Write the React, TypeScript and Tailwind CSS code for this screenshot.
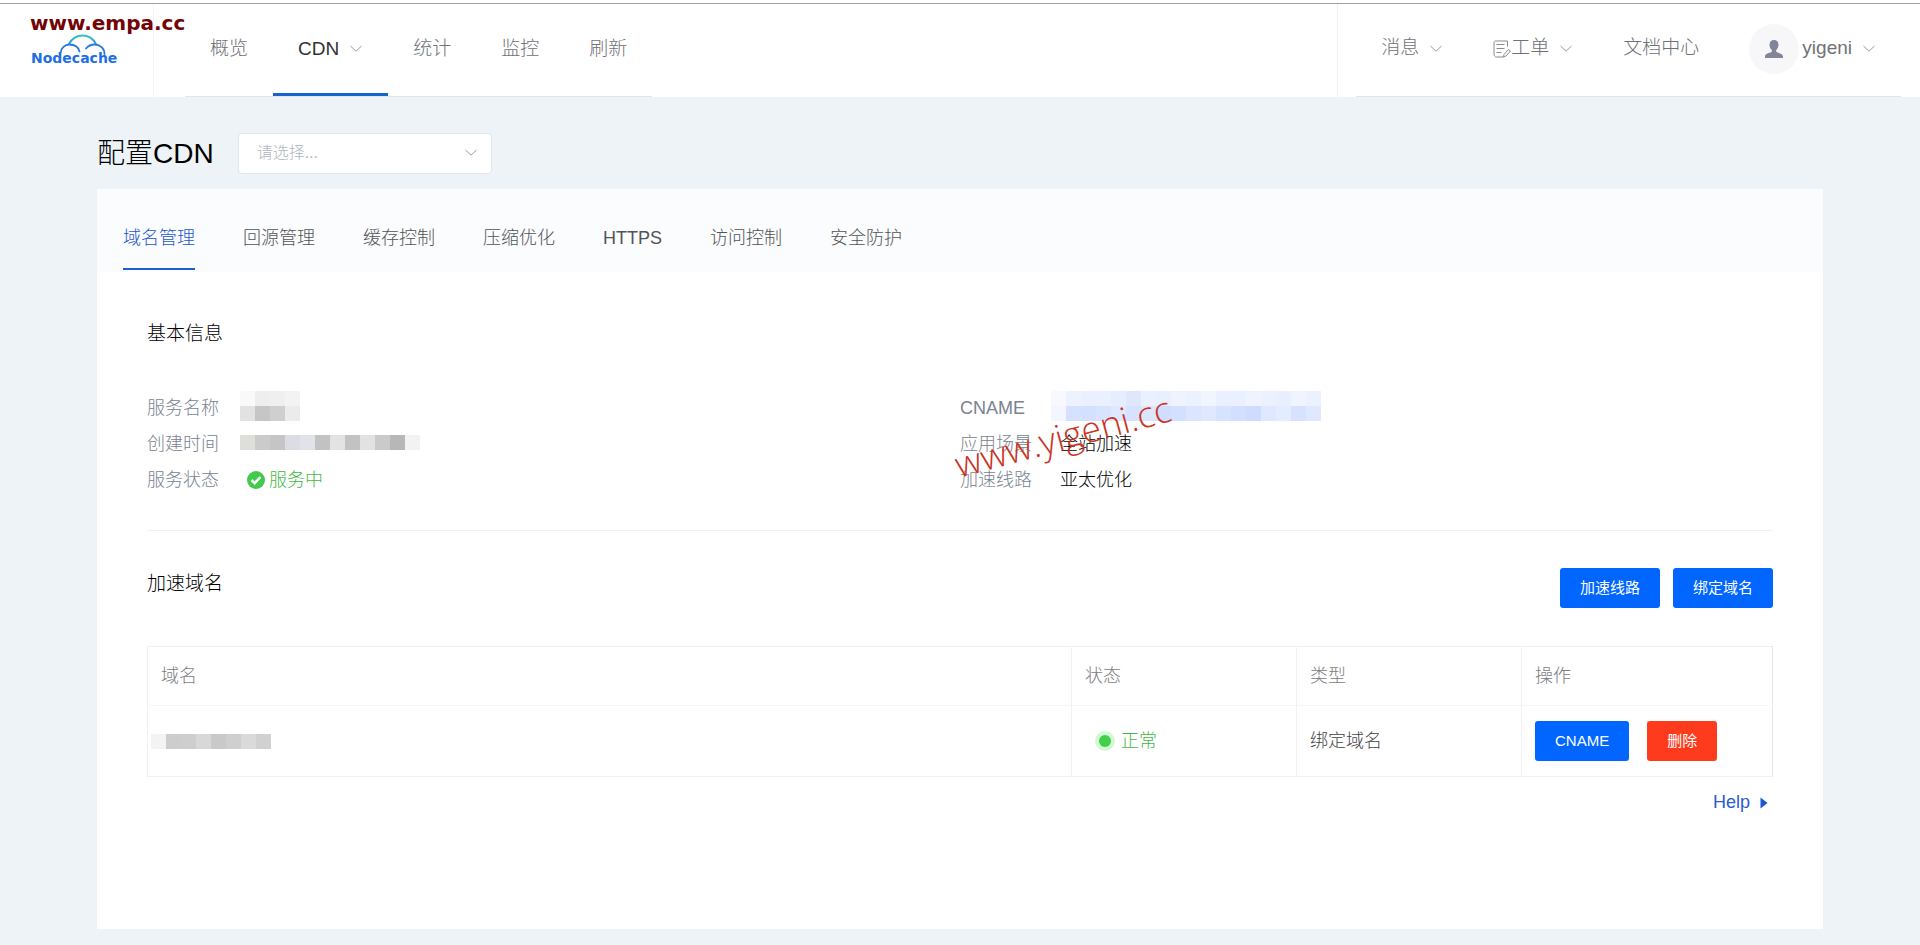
import React, {useState} from 'react';

const navItems = [
    {label: '概览'},
    {label: 'CDN', hasMenu: true},
    {label: '统计'},
    {label: '监控'},
    {label: '刷新'},
];

const tabs = ['域名管理', '回源管理', '缓存控制', '压缩优化', 'HTTPS', '访问控制', '安全防护'];

// Masked values, one colour per 15px block
const nameMask = [
    ['#f9f9f9', '#eeeeee', '#efefef', '#f3f3f3'],
    ['#e2e2e2', '#c6c6c6', '#cfcfcf', '#ebebeb'],
];
const timeMask = [
    ['#dededa', '#cbcbcb', '#c5c5c5', '#dcdce4', '#e2e3e8', '#c2c2c2', '#e3e3e3', '#c2c2c2', '#e2e2e2', '#cacaca', '#b7b7b7', '#f2f2f2'],
];
const cnameMask = [
    ['#f7f9ff', '#edf2ff', '#eaf0ff', '#eaf0ff', '#e6edff', '#dfe7fd', '#eaf0ff', '#e8effe', '#eef3ff', '#ebf1ff', '#f1f5ff', '#eaf0ff', '#e9f0ff', '#eef3ff', '#ebf1ff', '#e9effe', '#eff4ff', '#ebf1ff'],
    ['#f3f6ff', '#d5e1fe', '#d3e0fe', '#d8e3fe', '#dfe8ff', '#d6e2ff', '#dce6ff', '#cfddfe', '#d4e0ff', '#dbe5fe', '#dfe8ff', '#d6e2ff', '#d3dffe', '#cfdcfd', '#dfe8ff', '#e4ecff', '#d7e2fe', '#dfe8ff'],
];
const domainMask = [
    ['#f3f3f3', '#cdcdcd', '#cecece', '#d8d8d8', '#c9c9c9', '#cfcfcf', '#dadada', '#d1d1d1'],
];

const Mask = ({rows}: {rows: string[][]}) => (
    <div className="flex flex-col" aria-hidden="true">
        {rows.map((row, i) => (
            <div key={i} className="flex">
                {row.map((color, j) => (
                    <span key={j} className="h-[15px] w-[15px]" style={{backgroundColor: color}} />
                ))}
            </div>
        ))}
    </div>
);

const Chevron = () => (
    <svg className="w-[14px] h-[14px] shrink-0" viewBox="0 0 14 14" fill="none" stroke="#9a9ba0" aria-hidden="true">
        <path d="M1.5 4 7 9.200l5.5-5.2" />
    </svg>
);

const Logo = () => (
    <svg className="w-[92px] h-[34px] overflow-visible" viewBox="0 0 92 34" role="img" aria-label="Nodecache">
        <defs>
            <linearGradient id="cloud" x1="0" y1="0" x2="0" y2="1">
                <stop offset="0" stopColor="#35c4b4" />
                <stop offset="1" stopColor="#2a8fe0" />
            </linearGradient>
        </defs>
        <g fill="none" strokeWidth="1.8" strokeLinecap="round">
            <path d="M38 10C41 4.500 46 1.500 51.500 1.500S62 4.500 65 10" stroke="url(#cloud)" />
            <path d="M29.500 19c.3-4.600 4-8.500 9-8.500 4.800 0 8.800 2.500 10 7" stroke="#2a78e6" />
            <path d="M55 14.500c2-2.400 5.200-4 8.500-4 5.500 0 10 4 10 9.500" stroke="#2a78e6" />
        </g>
        <text x="0" y="29" fill="#1f6fe4" className="font-['DejaVu_Sans'] text-[14px] font-bold">Nodecache</text>
    </svg>
);

const menuItem = 'flex h-full items-center gap-[10px] px-[25px] text-[19px] whitespace-nowrap';
const primaryButton = 'h-10 px-5 rounded-[3px] bg-[#0066ff] text-[15px] font-normal text-white whitespace-nowrap cursor-pointer hover:bg-[#0057db]';

const Header = () => (
    <header className="bg-white pt-[3px]">
        <div className="flex h-[94px] items-stretch border-t border-[#a0a0a4] text-[#707177]">
            <a href="#" className="relative flex w-[154px] items-center border-r border-[#f4f5f7] pl-[31px]">
                <Logo />
                <span className="absolute left-[30px] top-[5px] z-10 font-['DejaVu_Sans'] text-[20px] leading-7 font-bold text-[#730404]">
                    www.empa.cc
                </span>
            </a>
            <nav className="ml-[31px] flex border-b border-[#e1e6ea]">
                {navItems.map((item) => (
                    <a
                        key={item.label}
                        href="#"
                        className={`${menuItem} ${
                            item.hasMenu ? 'border-b-3 border-[#1763cc] pt-px text-[#303133]' : 'pb-[2px]'
                        }`}
                    >
                        {item.label}
                        {item.hasMenu && <Chevron />}
                    </a>
                ))}
            </nav>
            <div className="ml-auto flex border-l border-[#f1f2f5] pl-[18px] pr-[19px]">
                <div className="flex border-b border-[#e1e6ea] pb-[3px]">
                    <a href="#" className={menuItem}>消息<Chevron /></a>
                    <a href="#" className={menuItem}>
                        <span className="flex items-center">
                            <svg className="h-[18px] w-[18px]" viewBox="0 0 18 18" fill="none" stroke="#8a8b90" aria-hidden="true">
                                <path d="M14.500 6.500V1H2.500c-1 0-1.500.7-1.500 1.500v11.500c0 1.700 1 3 2.500 3h7" />
                                <path d="M3.500 4.500h8M3.500 8.500h8M3.500 12.500h5" />
                                <path d="m15.500 9.500 2 1.500-4.500 5-2.500 1 .5-2.500z" />
                            </svg>
                            工单
                        </span>
                        <Chevron />
                    </a>
                    <a href="#" className={menuItem}>文档中心</a>
                    <a href="#" className={menuItem}>
                        <span className="flex items-center gap-[3px]">
                            <span className="flex h-[50px] w-[50px] items-center justify-center rounded-full bg-[#f7f7fa]">
                                <svg className="h-[18px] w-[18px]" viewBox="0 0 18 18" fill="#82859a" aria-hidden="true">
                                    <path d="M9 0c2.800 0 4.500 2 4.500 4.800 0 2-.9 4-2.300 5.200v1.800c.8 1 6.800 1.500 6.800 4.700V18H0v-1.500c0-3.200 6-3.700 6.800-4.700V10C5.400 8.800 4.500 6.800 4.500 4.800 4.500 2 6.200 0 9 0z" />
                                </svg>
                            </span>
                            yigeni
                        </span>
                        <Chevron />
                    </a>
                </div>
            </div>
        </div>
    </header>
);

const InfoRow = ({label, children}: {label: string; children: React.ReactNode}) => (
    <div className="flex h-9 items-center">
        <dt className="w-[100px] text-[#7a8391]">{label}</dt>
        <dd className="flex items-center text-black">{children}</dd>
    </div>
);

const Watermark = () => (
    <svg className="pointer-events-none absolute -left-[10px] top-0 h-[110px] w-[240px] overflow-visible" viewBox="0 0 240 110">
        <text
            transform="translate(9 88) rotate(-15)"
            fill="#c93426"
            className="font-['Open_Sans'] text-[36px] font-light"
        >
            www.yigeni.cc
        </text>
    </svg>
);

const App = () => {
    const [activeTab, setActiveTab] = useState(tabs[0]);

    return (
        <div className="min-h-screen bg-[#edf3f7] pb-[17px] font-['Liberation_Sans','Noto_Sans_CJK_SC',sans-serif] font-light text-[18px]">
            <Header />
            <main className="mx-[97px] pt-[35px]">
                <div className="flex items-center gap-6">
                    <h1 className="pt-[2px] text-[28px] leading-10 text-black">配置CDN</h1>
                    <div className="relative">
                        <select
                            aria-label="配置CDN"
                            defaultValue=""
                            className="block h-[41px] w-[254px] appearance-none rounded-[4px] border border-[#e2e5ea] bg-white px-[18px] text-[16px] text-[#b0b5bf]"
                        >
                            <option value="">请选择...</option>
                        </select>
                        <span className="pointer-events-none absolute right-[14px] top-[13px]">
                            <Chevron />
                        </span>
                    </div>
                </div>

                <section className="mt-[15px] min-h-[740px] bg-white">
                    <div role="tablist" className="flex h-[83px] items-end gap-12 bg-[#fbfcfd] px-[26px] pb-[2px]">
                        {tabs.map((tab) => (
                            <button
                                key={tab}
                                type="button"
                                role="tab"
                                aria-selected={tab === activeTab}
                                onClick={() => setActiveTab(tab)}
                                className={`h-[62px] border-b-2 cursor-pointer ${
                                    tab === activeTab
                                        ? 'border-[#1c5fd0] text-[#1a56cc]'
                                        : 'border-transparent text-[#515358]'
                                }`}
                            >
                                {tab}
                            </button>
                        ))}
                    </div>

                    <div className="px-[50px]">
                        <h2 className="pt-12 text-[19px] leading-7 text-black">基本信息</h2>
                        <div className="mt-[42px] grid grid-cols-2 border-b border-[#eff1f4] pb-8">
                            <dl>
                                <InfoRow label="服务名称">
                                    <div className="-ml-[7px] pb-1"><Mask rows={nameMask} /></div>
                                </InfoRow>
                                <InfoRow label="创建时间">
                                    <div className="-ml-[7px] pb-1"><Mask rows={timeMask} /></div>
                                </InfoRow>
                                <InfoRow label="服务状态">
                                    <span className="flex items-center gap-1 text-[#3fb843]">
                                        <svg className="h-[18px] w-[18px]" viewBox="0 0 18 18" aria-hidden="true">
                                            <circle cx="9" cy="9" r="9" fill="#43c94c" />
                                            <path d="m4.500 9 3.200 3.200 5.800-6.200" fill="none" stroke="#fff" strokeWidth="2.500" />
                                        </svg>
                                        服务中
                                    </span>
                                </InfoRow>
                            </dl>
                            <dl className="relative">
                                <InfoRow label="CNAME">
                                    <div className="-ml-[9px] pb-1"><Mask rows={cnameMask} /></div>
                                </InfoRow>
                                <InfoRow label="应用场景">全站加速</InfoRow>
                                <InfoRow label="加速线路">亚太优化</InfoRow>
                                <Watermark />
                            </dl>
                        </div>

                        <div className="flex items-start justify-between pt-[37px]">
                            <h2 className="text-[19px] leading-8 text-black">加速域名</h2>
                            <div className="flex gap-[13px]">
                                <button type="button" className={primaryButton}>加速线路</button>
                                <button type="button" className={primaryButton}>绑定域名</button>
                            </div>
                        </div>

                        <table className="mt-[38px] w-full table-fixed border-collapse border border-[#f0f0f2] border-r-[#e4e5e8] text-left">
                            <thead>
                                <tr className="h-[59px] border-b border-[#f6f6f8] text-[#7b7d82]">
                                    <th className="px-[13px] font-light">域名</th>
                                    <th className="w-[225px] border-l border-[#f2f2f4] px-[13px] font-light">状态</th>
                                    <th className="w-[225px] border-l border-[#f2f2f4] px-[13px] font-light">类型</th>
                                    <th className="w-[251px] border-l border-[#f2f2f4] px-[13px] font-light">操作</th>
                                </tr>
                            </thead>
                            <tbody>
                                <tr className="h-[71px] text-[#3f4146]">
                                    <td className="px-[3px]"><Mask rows={domainMask} /></td>
                                    <td className="border-l border-[#f2f2f4] px-[13px]">
                                        <span className="flex items-center gap-[6px] pl-[10px] text-[#3fb843]">
                                            <span className="flex h-5 w-5 items-center justify-center rounded-full bg-[#d2f8d4]">
                                                <span className="h-3 w-3 rounded-full bg-[#43cf49]" />
                                            </span>
                                            正常
                                        </span>
                                    </td>
                                    <td className="border-l border-[#f2f2f4] px-[13px]">绑定域名</td>
                                    <td className="border-l border-[#f2f2f4] px-[13px]">
                                        <div className="flex gap-[18px]">
                                            <button type="button" className={primaryButton}>CNAME</button>
                                            <button
                                                type="button"
                                                className="h-10 px-5 rounded-[3px] bg-[#ff3b1d] text-[15px] font-normal text-white cursor-pointer hover:bg-[#e02f14]"
                                            >
                                                删除
                                            </button>
                                        </div>
                                    </td>
                                </tr>
                            </tbody>
                        </table>

                        <div className="flex justify-end pt-3 pr-[5px]">
                            <a href="#" className="flex items-center gap-[10px] text-[#2a5bd0]">
                                Help
                                <svg className="h-[12px] w-[8px]" viewBox="0 0 8 12" fill="#1a56d6" aria-hidden="true">
                                    <path d="M0.500 0.500 7.500 6 0.500 11.500z" />
                                </svg>
                            </a>
                        </div>
                    </div>
                </section>
            </main>
        </div>
    );
};

export default App;
